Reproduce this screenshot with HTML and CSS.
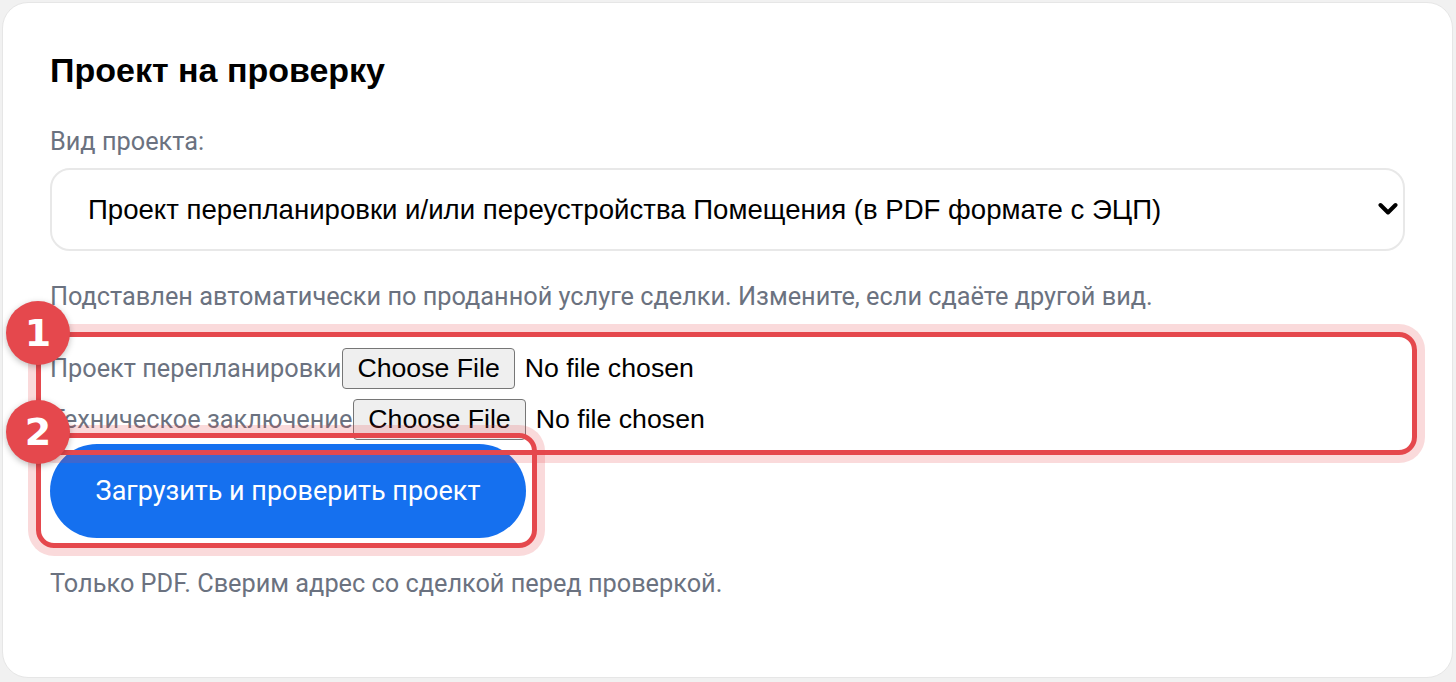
FILE: index.html
```html
<!DOCTYPE html>
<html lang="ru">
<head>
<meta charset="utf-8">
<title>Проект на проверку</title>
<link rel="stylesheet" href="styles.css">
</head>
<body>
<div class="card">
  <h2 class="title">Проект на проверку</h2>
  <div class="field-label">Вид проекта:</div>
  <div class="select-wrap">
    <select class="select">
      <option>Проект перепланировки и/или переустройства Помещения (в PDF формате с ЭЦП)</option>
    </select>
    <svg class="chevron" width="20" height="14" viewBox="0 0 20 14"><path d="M2.5 3 L10 10.5 L17.5 3" fill="none" stroke="#000" stroke-width="4" stroke-linecap="round" stroke-linejoin="round"/></svg>
  </div>
  <p class="hint">Подставлен автоматически по проданной услуге сделки. Измените, если сдаёте другой вид.</p>
  <div class="files">
    <label class="file-row">Проект перепланировки<input type="file" class="file" accept="application/pdf"></label>
    <label class="file-row">Техническое заключение<input type="file" class="file" accept="application/pdf"></label>
  </div>
  <button class="submit" type="button">Загрузить и проверить проект</button>
  <p class="footnote">Только PDF. Сверим адрес со сделкой перед проверкой.</p>
</div>

<div class="mark mark-1"></div>
<div class="mark mark-2"></div>
<div class="badge badge-1">1</div>
<div class="badge badge-2">2</div>
</body>
</html>
```

FILE: styles.css
```css
* { box-sizing: border-box; }

html, body {
  margin: 0;
  padding: 0;
}

body {
  position: relative;
  background: #f1f1f1;
  padding: 2px 3px 4px 2px;
  height: 682px;
  overflow: hidden;
  font-family: Roboto, "Liberation Sans", Arial, sans-serif;
}

.card {
  width: 1451px;
  height: 676px;
  background: #ffffff;
  border: 1px solid #e6e6e6;
  border-radius: 26px;
  padding: 48px 47px 0 47px;
}

.title {
  margin: 0;
  font-family: "Liberation Sans", Arial, sans-serif;
  font-weight: 700;
  font-size: 34px;
  line-height: 38px;
  color: #000;
}

.field-label {
  margin-top: 35px;
  font-size: 25.3px;
  line-height: 36px;
  color: #6b7280;
}

.select-wrap {
  position: relative;
  margin-top: 8px;
}

.select {
  display: block;
  width: 100%;
  height: 83px;
  appearance: none;
  -webkit-appearance: none;
  background: #fff;
  border: 2px solid #e8e8e8;
  border-radius: 20px;
  padding: 0 60px 0 36px;
  font-family: "Liberation Sans", Arial, sans-serif;
  font-size: 27.6px;
  color: #000;
  outline: none;
}

.chevron {
  position: absolute;
  right: 7px;
  top: 34px;
  pointer-events: none;
}

.hint {
  margin: 28px 0 0 0;
  font-size: 25.3px;
  line-height: 36px;
  color: #6b7280;
}

.files {
  margin-top: 33px;
  display: flex;
  flex-direction: column;
  gap: 10px;
}

.file-row {
  display: flex;
  align-items: baseline;
  height: 41px;
  font-size: 25.3px;
  color: #6b7280;
}

.file {
  font-family: "Liberation Sans", Arial, sans-serif;
  font-size: 26.7px;
  color: #000;
}

.file::file-selector-button {
  font-family: "Liberation Sans", Arial, sans-serif;
  font-size: 26.7px;
  color: #000;
  height: 41px;
  padding: 0 14px;
  margin: 0 10px 0 1px;
  background: #efefef;
  border: 1.5px solid #767676;
  border-radius: 4px;
}

.submit {
  display: block;
  margin-top: 4px;
  width: 476px;
  height: 94px;
  padding: 0;
  border: none;
  border-radius: 47px;
  background: #1570ef;
  color: #fff;
  font-family: Roboto, "Liberation Sans", Arial, sans-serif;
  font-size: 27px;
  line-height: 36px;
  cursor: pointer;
}

.footnote {
  margin: 28px 0 0 0;
  font-size: 25.3px;
  line-height: 36px;
  color: #6b7280;
}

/* annotation overlays */
.mark {
  position: absolute;
  border: 5px solid #e5484d;
  border-radius: 18px;
  box-shadow: 0 0 0 8px rgba(229, 72, 77, 0.2);
  pointer-events: none;
}

.mark-1 {
  left: 36px;
  top: 332px;
  width: 1381px;
  height: 123px;
}

.mark-2 {
  left: 36px;
  top: 433px;
  width: 501px;
  height: 115px;
}

.badge {
  position: absolute;
  left: 6px;
  width: 64px;
  height: 64px;
  border-radius: 50%;
  background: #e5484d;
  color: #fff;
  font-family: "DejaVu Sans", sans-serif;
  font-weight: 700;
  font-size: 38px;
  line-height: 64px;
  text-align: center;
  box-shadow: 0 2px 6px rgba(0, 0, 0, 0.25);
}

.badge-1 { top: 301px; }
.badge-2 { top: 400px; }
```
